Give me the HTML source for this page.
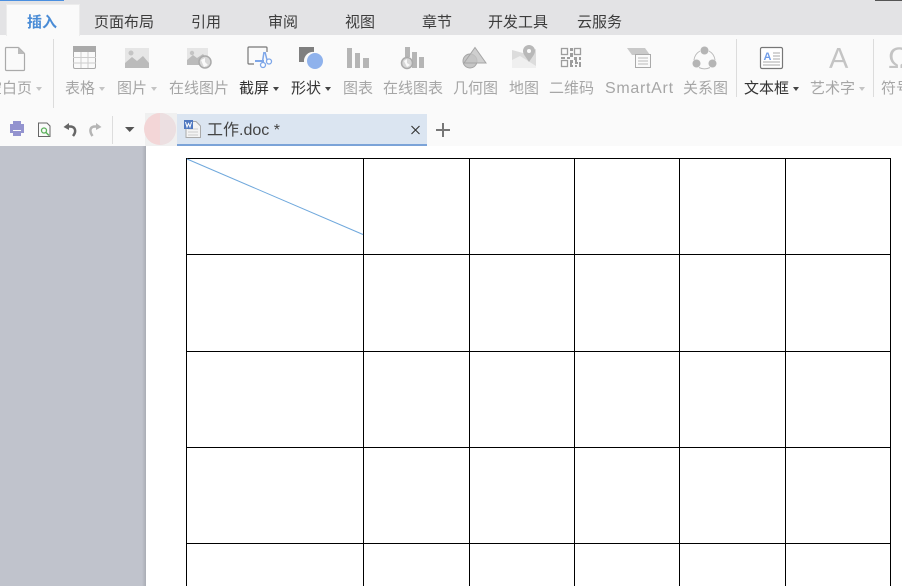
<!DOCTYPE html>
<html lang="zh"><head><meta charset="utf-8"><style>
html,body{margin:0;padding:0}
body{width:902px;height:586px;position:relative;overflow:hidden;background:#fff;font-family:"Liberation Sans","Noto Sans CJK SC",sans-serif;font-size:15px}
div{position:absolute}
.t{position:absolute;white-space:nowrap;line-height:20px;top:79px;color:#a6a6a6}
.n{top:13px;color:#3c3c3c}
.d{color:#333}
.a{position:absolute;width:0;height:0;border:3px solid transparent;border-top:4px solid #c4c4c4;border-bottom:0;top:87px}
.a.k{border-top-color:#444}
.sep{position:absolute;width:1px;background:#dcdcdc}
svg{position:absolute;left:0;top:0}
</style></head><body>
<div style="left:0;top:0;width:902px;height:35px;background:#e3e3e5"></div>
<div style="left:0;top:0;width:64px;height:1px;background:#4a8fe0"></div>
<div style="left:875px;top:0;width:27px;height:1px;background:#555"></div>
<div style="left:0;top:35px;width:902px;height:111px;background:#fafafa"></div>
<div style="left:6px;top:4px;width:72px;height:31px;background:#fafafa;border:1px solid #ececec;border-bottom:0"></div>
<span class="t n" style="left:27px;color:#4a8cd6;font-weight:bold">插入</span>
<span class="t n" style="left:94px">页面布局</span>
<span class="t n" style="left:191px">引用</span>
<span class="t n" style="left:268px">审阅</span>
<span class="t n" style="left:345px">视图</span>
<span class="t n" style="left:422px">章节</span>
<span class="t n" style="left:488px">开发工具</span>
<span class="t n" style="left:577px">云服务</span>
<div class="sep" style="left:53px;top:39px;height:69px"></div>
<div class="sep" style="left:736px;top:39px;height:58px"></div>
<div class="sep" style="left:873px;top:39px;height:58px"></div>
<span class="t" style="left:-13px">空白页</span><i class="a" style="left:36px"></i>
<span class="t" style="left:65px">表格</span><i class="a" style="left:99px"></i>
<span class="t" style="left:117px">图片</span><i class="a" style="left:151px"></i>
<span class="t" style="left:169px">在线图片</span>
<span class="t d" style="left:239px">截屏</span><i class="a k" style="left:273px"></i>
<span class="t d" style="left:291px">形状</span><i class="a k" style="left:325px"></i>
<span class="t" style="left:343px">图表</span>
<span class="t" style="left:383px">在线图表</span>
<span class="t" style="left:453px">几何图</span>
<span class="t" style="left:509px">地图</span>
<span class="t" style="left:549px">二维码</span>
<span class="t" style="left:605px;font-size:16px;letter-spacing:.7px">SmartArt</span>
<span class="t" style="left:683px">关系图</span>
<span class="t d" style="left:744px">文本框</span><i class="a k" style="left:793px"></i>
<span class="t" style="left:810px">艺术字</span><i class="a" style="left:859px"></i>
<span class="t" style="left:881px">符号</span>
<div style="left:0;top:146px;width:145px;height:440px;background:#c0c3cc"></div>
<div style="left:142px;top:146px;width:4px;height:440px;background:linear-gradient(90deg,#c0c3cc,#a9acb4)"></div>
<div style="left:145px;top:113px;width:32px;height:33px;background:#f0f0f0"></div>
<div style="left:144px;top:113px;width:32px;height:32px;border-radius:50%;background:#f3d6d7"></div>
<div style="left:177px;top:114px;width:250px;height:30px;background:#dbe5f1;border-bottom:2px solid #7ba3d8"></div>
<span class="t" style="left:207px;top:121px;color:#444;font-size:16px">工作.doc *</span>
<svg width="902" height="586" viewBox="0 0 902 586">
<defs><linearGradient id="af" x1="0" y1="0" x2="0" y2="1"><stop offset=".72" stop-color="#c4c4c4"/><stop offset="1" stop-color="#f2f2f2"/></linearGradient></defs>
<path d="M5.600 47.500H18.500L24.500 53.500V69.500Q24.500 70.500 23.500 70.500H6.600Q5.500 70.500 5.500 69.500V48.500Q5.500 47.500 6.600 47.500Z" fill="none" stroke="#aaa" stroke-width="1.200"/>
<path d="M18 47L25 54H18Z" fill="#bbb"/>
<rect x="73.500" y="46.500" width="22" height="22" rx="1.500" fill="#fafafa" stroke="#aaa"/>
<rect x="73" y="46" width="23" height="6" fill="#aaa"/>
<path d="M73 57.500H96M73 63H96M81 52V68M88 52V68" stroke="#ccc"/>
<rect x="125" y="48" width="24" height="20" fill="#e6e6e6"/>
<circle cx="131" cy="53" r="2.500" fill="#c4c4c4"/>
<path d="M125 68V63L132 57L137 61L143 56L149 63V68Z" fill="#bbb"/>
<rect x="187" y="48" width="21" height="17" fill="#e6e6e6"/>
<circle cx="192" cy="53" r="2.200" fill="#c4c4c4"/>
<path d="M187 65V60L193 55L197 58L203 54L207 59V65Z" fill="#bbb"/>
<circle cx="205" cy="62" r="6" fill="#d8d8d8" stroke="#aaa" stroke-width="1.500"/>
<path d="M201 60L205 58V62L208 65L204 67Z" fill="#fafafa"/>
<path d="M254 64H249Q248 64 248 63V48Q248 47 249 47H266Q267 47 267 48V52" fill="none" stroke="#777" stroke-width="1.200"/>
<path d="M255 60H264V62H255Z" fill="#7da6e8"/>
<path d="M264 52L262 65M265 52L267 60" stroke="#7da6e8" stroke-width="1.500"/>
<circle cx="263" cy="65" r="2.500" fill="#fff" stroke="#7da6e8" stroke-width="1.300"/>
<circle cx="269" cy="61.500" r="2.500" fill="#fff" stroke="#7da6e8" stroke-width="1.300"/>
<path d="M299 47H314V52A9 9 0 0 0 304 62H299Z" fill="#7f7f7f"/>
<circle cx="315" cy="61" r="8" fill="#8fb2ec"/>
<path d="M347 48H352V68H347ZM355 53H360V68H355ZM363 58H369V68H363Z" fill="#b5b5b5"/>
<path d="M405 47H410V57H405ZM412 52H417V68H412ZM419 57H424V68H419Z" fill="#b5b5b5"/>
<circle cx="407" cy="63" r="5.500" fill="#d8d8d8" stroke="#aaa" stroke-width="1.500"/>
<path d="M404 61L407 59V63L410 65L407 67Z" fill="#fafafa"/>
<circle cx="470" cy="61" r="7" fill="#c6c6c6" stroke="#a5a5a5"/>
<path d="M475 47.500L486 63H464Z" fill="#c4c4c4" fill-opacity=".8" stroke="#a5a5a5"/>
<path d="M512 50L523 53L536 49V67L525 68L512 68Z" fill="#dcdcdc"/>
<path d="M512 60L520 56L536 66V68H512Z" fill="#efefef"/>
<path d="M529 62C525 56 523 54 523 51A6 6 0 0 1 535 51C535 54 533 56 529 62Z" fill="#b8b8b8"/>
<circle cx="529" cy="51" r="2" fill="#fafafa"/>
<g fill="none" stroke="#9d9d9d" stroke-width="1.300">
<rect x="561.500" y="48.500" width="6" height="6"/><rect x="574.500" y="48.500" width="6" height="6"/><rect x="561.500" y="60.500" width="6" height="6"/>
</g>
<path d="M570 48h3v3h-3zM570 53h3v4h-3zM561 57h4v2h-4zM567 57h3v2h-3zM574 57h3v3h-3zM579 57h2v3h-2zM570 60h3v3h-3zM575 60h2v2h-2zM575 62h3v2h-3zM570 65h3v2h-3zM575 65h2v2h-2zM579 62h2v5h-2zM570 63h2v2h-2z" fill="#9d9d9d"/>
<path d="M627 48H645L650 55H632Z" fill="#c9c9c9"/>
<rect x="635.500" y="54.500" width="15" height="13" fill="#fafafa" stroke="#aaa"/>
<path d="M638 58H648M638 61H648M638 64H648" stroke="#bbb"/>
<circle cx="704.500" cy="50.500" r="4" fill="#b5b5b5"/>
<circle cx="696.500" cy="63.500" r="4" fill="#b5b5b5"/>
<circle cx="712.500" cy="63.500" r="4" fill="#b5b5b5"/>
<path d="M700 51A12 12 0 0 0 694 60M709 51A12 12 0 0 1 715 60M699 67.500A12 12 0 0 0 710 67.500" fill="none" stroke="#bbb"/>
<rect x="760.500" y="47.500" width="22" height="21" rx="1.500" fill="#fff" stroke="#777" stroke-width="1.200"/>
<text x="763.500" y="60" font-family="Liberation Sans" font-size="11" font-weight="bold" fill="#6f9ce8">A</text>
<path d="M773 53H780M773 56H780M773 59H780M763 62H780M763 65H780" stroke="#aaa"/>
<text x="829" y="68" font-family="Liberation Sans" font-size="29" fill="url(#af)">A</text>
<text x="888" y="68" font-family="Liberation Sans" font-size="30" fill="#c4c4c4">Ω</text>
<path d="M10 124H24V133H21V130H13V133H10Z" fill="#9393cf"/>
<rect x="13" y="121" width="8" height="3" fill="#9393cf"/>
<rect x="13" y="131" width="8" height="5" fill="#9393cf"/>
<path d="M38.500 123V136.500H50V126L47 123Z" fill="#fafafa" stroke="#666"/>
<circle cx="44" cy="130.500" r="2.500" fill="none" stroke="#5bb05b" stroke-width="1.300"/>
<path d="M46 132.500L49 135.500" stroke="#5bb05b" stroke-width="1.500"/>
<path d="M69 123V130L63.500 127Z" fill="#666"/>
<path d="M66 126.500H70C75 126.500 77 131 73 136" fill="none" stroke="#666" stroke-width="2.500"/>
<path d="M96 123V130L101.500 127Z" fill="#b5b5b5"/>
<path d="M99 126.500H95C90 126.500 89 131 92.500 136" fill="none" stroke="#b5b5b5" stroke-width="2.500"/>
<path d="M112.500 116V144" stroke="#ddd"/>
<path d="M125 127H134.500L129.700 132Z" fill="#555"/>
<path d="M160 113A16 16 0 0 1 160 145Z" fill="#ecdfe1"/>
<path d="M186 121.500H196L200.500 126V137.500H186Z" fill="#f4f4f4" stroke="#aaa"/>
<path d="M188 129H198M188 132H198M188 135H198" stroke="#ccc"/>
<rect x="184" y="120" width="9" height="9" fill="#4f78c0"/>
<path d="M185.500 122L187 127L188.500 123.500L190 127L191.500 122" fill="none" stroke="#fff"/>
<path d="M411.500 126L419.500 134M419.500 126L411.500 134" stroke="#333" stroke-width="1.100"/>
<path d="M443 123V137M436 130H450" stroke="#777" stroke-width="2"/>
<g stroke="#000" stroke-width="1" shape-rendering="crispEdges">
<path d="M186.500 158V586M363.500 158V586M469.500 158V586M574.500 158V586M679.500 158V586M785.500 158V586M890.500 158V586"/>
<path d="M186 158.500H891M186 254.500H891M186 351.500H891M186 447.500H891M186 543.500H891"/>
</g>
<path d="M187 159L363 234.500" stroke="#6fa8dc" stroke-width="1" fill="none"/>
</svg>
</body></html>
